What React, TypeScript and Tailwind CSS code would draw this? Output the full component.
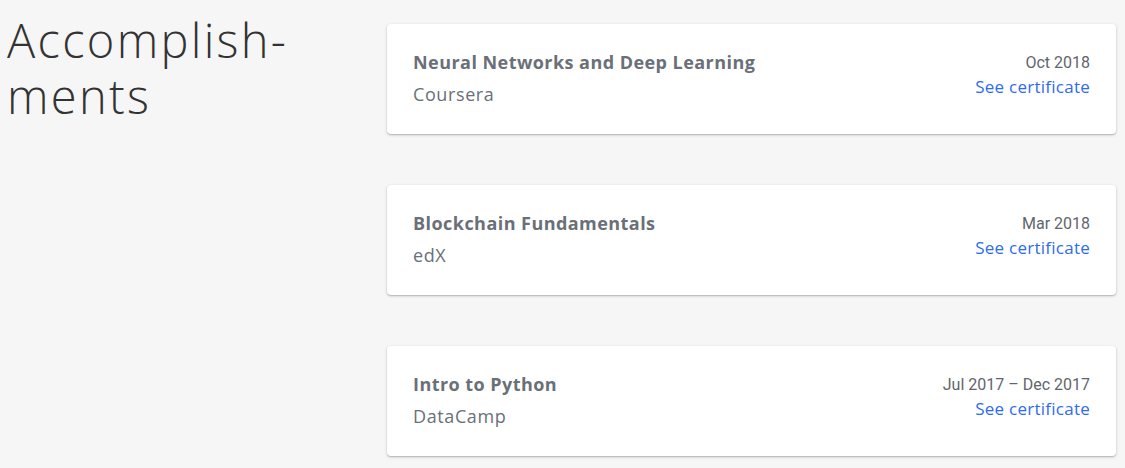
import React from "react";

const items = [
  { title: "Neural Networks and Deep Learning", org: "Coursera", date: "Oct 2018" },
  { title: "Blockchain Fundamentals", org: "edX", date: "Mar 2018" },
  { title: "Intro to Python", org: "DataCamp", date: "Jul 2017 – Dec 2017" },
];

export default function App() {
  return (
    <div className="w-[1125px] h-[468px] bg-[#f6f6f6] overflow-hidden flex" style={{ fontFamily: "'Open Sans', sans-serif" }}>
      <div className="w-[387px] shrink-0 pl-[7px] pt-[12px]">
        <h1 className="text-[47px] leading-[56px] font-light text-[#333333] tracking-[2.3px]">
          Accomplish-
          <br />
          ments
        </h1>
      </div>
      <div className="w-[729px] pt-[24px] flex flex-col gap-[51px]">
        {items.map((it) => (
          <div
            key={it.title}
            className="h-[110px] bg-white rounded-[4px] shadow-[0_1px_3px_rgba(0,0,0,0.22),0_1px_1px_rgba(0,0,0,0.1)] px-[26px] pt-[26px] flex justify-between"
          >
            <div>
              <div className="text-[18px] leading-[25px] font-bold text-[#6a7077] tracking-[0.45px]">{it.title}</div>
              <div className="mt-[7px] text-[18px] leading-[25px] font-normal text-[#6a7077] tracking-[0.6px]">{it.org}</div>
            </div>
            <div className="text-right pt-[3px]">
              <div className="text-[16px] leading-[20px] text-[#62666c]" style={{ fontFamily: "Roboto, sans-serif" }}>{it.date}</div>
              <div className="mt-[3px] text-[17px] leading-[22px] text-[#2e6bf2] tracking-[0.25px]">See certificate</div>
            </div>
          </div>
        ))}
      </div>
    </div>
  );
}
